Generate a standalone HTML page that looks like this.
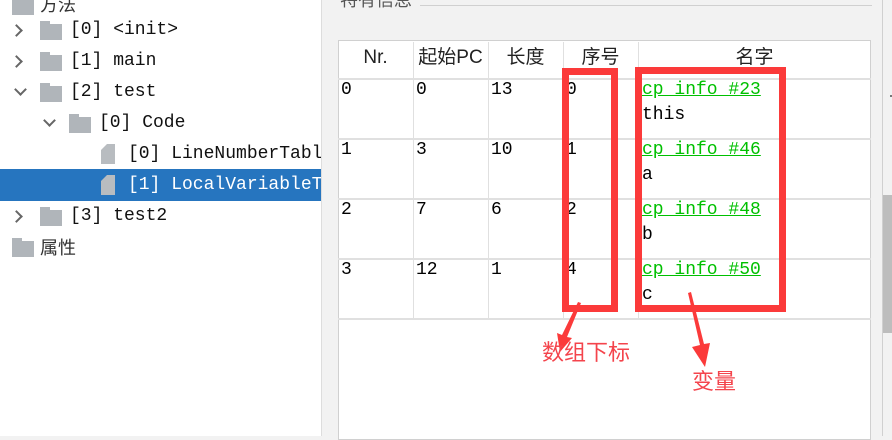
<!DOCTYPE html>
<html><head><meta charset="utf-8"><style>
body{margin:0;width:892px;height:436px;position:relative;overflow:hidden;background:#f2f2f2;font-family:"Liberation Mono","Noto Sans CJK SC",monospace;}
.a{position:absolute;}
.left{left:0;top:0;width:321px;height:436px;background:#fff;}
.row{position:absolute;left:0;width:321px;height:31px;font-size:18px;line-height:31px;color:#111;white-space:nowrap;}
.fold{position:absolute;width:22px;height:16px;background:#b0b5ba;}
.fold:before{content:"";position:absolute;left:0;top:-3px;width:10px;height:4px;background:#b0b5ba;}
.file{position:absolute;width:14px;height:20px;background:#b8bcc0;clip-path:polygon(6px 0,100% 0,100% 100%,0 100%,0 6px);}
.chev{position:absolute;width:7px;height:7px;border-right:2px solid #666;border-bottom:2px solid #666;}
.cell{position:absolute;font-size:18px;line-height:25px;color:#000;}
.lnk{color:#00c000;text-decoration:underline;}
.hd{position:absolute;top:40px;height:39px;line-height:36px;font-size:19px;color:#222;text-align:center;font-family:"Liberation Sans","Noto Sans CJK SC",sans-serif;}
.red{position:absolute;border:7px solid #fb3a3a;box-sizing:border-box;}
.lbl{position:absolute;color:#f4444c;font-size:22px;font-family:"Noto Sans CJK SC",sans-serif;}
</style></head><body>
<div class="a left">
 <div class="row" style="top:-11px"><div class="fold" style="left:12px;top:10px"></div><span class="a" style="left:40px;font-family:'Noto Sans CJK SC',sans-serif;color:#333">方法</span></div>
 <div class="row" style="top:15px"><div class="chev" style="left:12px;top:11px;transform:rotate(-45deg)"></div><div class="fold" style="left:40px;top:9px"></div><span class="a" style="left:70px">[0] &lt;init&gt;</span></div>
 <div class="row" style="top:46px"><div class="chev" style="left:12px;top:11px;transform:rotate(-45deg)"></div><div class="fold" style="left:40px;top:9px"></div><span class="a" style="left:70px">[1] main</span></div>
 <div class="row" style="top:77px"><div class="chev" style="left:16px;top:8px;transform:rotate(45deg)"></div><div class="fold" style="left:40px;top:9px"></div><span class="a" style="left:70px">[2] test</span></div>
 <div class="row" style="top:108px"><div class="chev" style="left:45px;top:8px;transform:rotate(45deg)"></div><div class="fold" style="left:69px;top:9px"></div><span class="a" style="left:99px">[0] Code</span></div>
 <div class="row" style="top:139px"><div class="file" style="left:101px;top:5px"></div><span class="a" style="left:128px">[0] LineNumberTabl</span></div>
 <div class="row" style="top:169px;height:32px;background:#2675bf;color:#fff"><div class="file" style="left:101px;top:6px"></div><span class="a" style="left:128px;top:1px">[1] LocalVariableT</span></div>
 <div class="row" style="top:201px"><div class="chev" style="left:12px;top:11px;transform:rotate(-45deg)"></div><div class="fold" style="left:40px;top:9px"></div><span class="a" style="left:70px">[3] test2</span></div>
 <div class="row" style="top:232px"><div class="fold" style="left:12px;top:9px"></div><span class="a" style="left:40px;font-family:'Noto Sans CJK SC',sans-serif;color:#333">属性</span></div>
</div>
<div class="a" style="left:321px;top:0;width:1px;height:436px;background:#ddd"></div>
<span class="a" style="left:340px;top:-14px;font-size:18px;color:#555;font-family:'Noto Sans CJK SC',sans-serif">特有信息</span>
<div class="a" style="left:420px;top:5px;width:452px;height:1px;background:#d0d0d0"></div>
<div class="a" style="left:338px;top:40px;width:533px;height:400px;background:#fff;border:1px solid #d0d0d0;box-sizing:border-box"></div>
<div class="a" style="left:882px;top:0;width:1px;height:436px;background:#d0d0d0"></div>
<div class="a" style="left:883px;top:195px;width:9px;height:138px;background:#bdbdbd"></div>
<div class="a" style="left:890px;top:95px;width:2px;height:10px;border-top:2px dotted #777"></div>
<div class="hd" style="left:338px;width:75px">Nr.</div>
<div class="hd" style="left:413px;width:75px">起始PC</div>
<div class="hd" style="left:488px;width:75px">长度</div>
<div class="hd" style="left:563px;width:75px">序号</div>
<div class="hd" style="left:638px;width:233px">名字</div>
<div class="a" style="left:338px;top:78px;width:533px;height:2px;background:#e0e0e0"></div>
<div class="a" style="left:338px;top:138px;width:533px;height:2px;background:#e0e0e0"></div>
<div class="a" style="left:338px;top:198px;width:533px;height:2px;background:#e0e0e0"></div>
<div class="a" style="left:338px;top:258px;width:533px;height:2px;background:#e0e0e0"></div>
<div class="a" style="left:338px;top:318px;width:533px;height:2px;background:#e0e0e0"></div>
<div class="a" style="left:413px;top:42px;width:1px;height:276px;background:#e0e0e0"></div>
<div class="a" style="left:488px;top:42px;width:1px;height:276px;background:#e0e0e0"></div>
<div class="a" style="left:563px;top:42px;width:1px;height:276px;background:#e0e0e0"></div>
<div class="a" style="left:638px;top:42px;width:1px;height:276px;background:#e0e0e0"></div>
<div class="cell" style="left:341px;top:78px">0</div><div class="cell" style="left:416px;top:78px">0</div><div class="cell" style="left:491px;top:78px">13</div><div class="cell" style="left:566px;top:78px">0</div>
<div class="cell" style="left:642px;top:78px"><span class="lnk">cp_info #23</span><br>this</div>
<div class="cell" style="left:341px;top:138px">1</div><div class="cell" style="left:416px;top:138px">3</div><div class="cell" style="left:491px;top:138px">10</div><div class="cell" style="left:566px;top:138px">1</div>
<div class="cell" style="left:642px;top:138px"><span class="lnk">cp_info #46</span><br>a</div>
<div class="cell" style="left:341px;top:198px">2</div><div class="cell" style="left:416px;top:198px">7</div><div class="cell" style="left:491px;top:198px">6</div><div class="cell" style="left:566px;top:198px">2</div>
<div class="cell" style="left:642px;top:198px"><span class="lnk">cp_info #48</span><br>b</div>
<div class="cell" style="left:341px;top:258px">3</div><div class="cell" style="left:416px;top:258px">12</div><div class="cell" style="left:491px;top:258px">1</div><div class="cell" style="left:566px;top:258px">4</div>
<div class="cell" style="left:642px;top:258px"><span class="lnk">cp_info #50</span><br>c</div>
<div class="red" style="left:562px;top:68px;width:56px;height:244px"></div>
<div class="red" style="left:635px;top:67px;width:151px;height:245px"></div>
<svg class="a" style="left:0;top:0" width="892" height="436">
<polygon points="578,302 562,335 557,333 560,352 572,338 567,337 581,303" fill="#fb3a3a"/>
<polygon points="688,293 700,345 692,347 705,367 710,343 704,344 691,292" fill="#fb3a3a"/>
</svg>
<div class="lbl" style="left:542px;top:335px">数组下标</div>
<div class="lbl" style="left:692px;top:364px">变量</div>
</body></html>
